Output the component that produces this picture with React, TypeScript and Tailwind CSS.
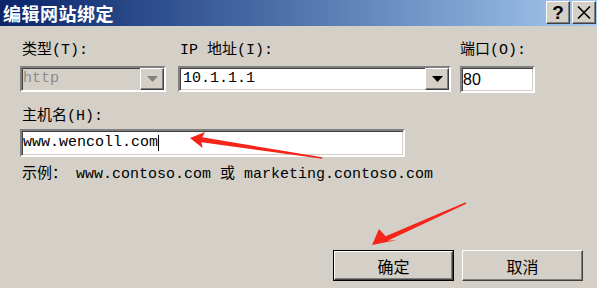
import React from "react";

const MONO = "font-['Liberation_Mono','Noto_Sans_CJK_SC',monospace]";

// classic 3D edges
const SUNKEN =
  "border-2 border-t-[#808080] border-l-[#808080] border-b-white border-r-white shadow-[inset_1px_1px_0_#404040,inset_-1px_-1px_0_#d4d0c8]";
const RAISED =
  "border border-t-white border-l-white border-b-[#404040] border-r-[#404040] shadow-[inset_-1px_-1px_0_#808080]";

function DropButton({ disabled }: { disabled?: boolean }) {
  return (
    <div className={`w-[24px] h-full bg-[#d4d0c8] flex items-center justify-center ${RAISED}`}>
      <svg width="11" height="6" viewBox="0 0 11 6">
        <polygon points="0,0 11,0 5.5,6" fill={disabled ? "#808080" : "#000"} />
      </svg>
    </div>
  );
}

function Button({ label, isDefault }: { label: string; isDefault?: boolean }) {
  return (
    <div className={`w-[121px] h-[31px] ${isDefault ? "border border-black" : ""}`}>
      <div
        className={`w-full h-full bg-[#d4d0c8] flex items-center justify-center text-[16px] text-black font-['Noto_Sans_CJK_SC',sans-serif] ${RAISED}`}
      >
        {label}
      </div>
    </div>
  );
}

export default function App() {
  return (
    <div className={`relative w-[597px] h-[288px] bg-[#d4d0c8] overflow-hidden flex flex-col text-[15px] text-black ${MONO}`}>
      {/* Title bar */}
      <div className="h-[26px] flex items-center justify-between bg-gradient-to-r from-[#0a246a] to-[#a6caf0] pl-[3px] pr-[1px]">
        <span className="text-white font-bold text-[18px] leading-none font-['Noto_Sans_CJK_SC',sans-serif] tracking-[0.5px]">
          编辑网站绑定
        </span>
        <div className="flex gap-[2px] self-start mt-[1px]">
          <div className={`w-[24px] h-[23px] bg-[#d4d0c8] flex items-center justify-center text-[19px] font-black leading-none font-['Liberation_Sans',sans-serif] ${RAISED}`}>
            ?
          </div>
          <div className={`w-[24px] h-[23px] bg-[#d4d0c8] flex items-center justify-center ${RAISED}`}>
            <svg width="14" height="13" viewBox="0 0 14 13">
              <path d="M1 0.5 L13 12.5 M13 0.5 L1 12.5" stroke="#000" strokeWidth="1.6" />
            </svg>
          </div>
        </div>
      </div>

      <div className="flex-1 flex flex-col pl-[20px] pr-[14px] pb-[7px]">
        {/* Type / IP / Port */}
        <div className="flex mt-[16px]">
          <div className="w-[146px] flex flex-col">
            <span className="h-[18px] leading-[18px] pl-[2px]">类型(T):</span>
            <div className={`mt-[6px] h-[26px] flex bg-[#d4d0c8] ${SUNKEN}`}>
              <span className="flex-1 pl-[1px] leading-[22px] text-[#8c8c8c]">http</span>
              <DropButton disabled />
            </div>
          </div>
          <div className="w-[273px] ml-[12px] flex flex-col">
            <span className="h-[18px] leading-[18px] pl-[2px]">IP 地址(I):</span>
            <div className={`mt-[6px] h-[26px] flex bg-white ${SUNKEN}`}>
              <span className="flex-1 pl-[3px] leading-[22px]">10.1.1.1</span>
              <DropButton />
            </div>
          </div>
          <div className="w-[75px] ml-[9px] flex flex-col">
            <span className="h-[18px] leading-[18px]">端口(O):</span>
            <div className={`mt-[6px] h-[27px] bg-white ${SUNKEN}`}>
              <span className="pl-[1px] leading-[23px] text-[16px] font-['Liberation_Sans',sans-serif]">80</span>
            </div>
          </div>
        </div>

        {/* Host name */}
        <span className="mt-[15px] h-[18px] leading-[18px] pl-[2px]">主机名(H):</span>
        <div className={`mt-[3px] w-[385px] h-[28px] bg-white flex items-center ${SUNKEN}`}>
          <span className="pl-[1px]">www.wencoll.com</span>
          <span className="w-px h-[16px] bg-black" />
        </div>
        <span className="mt-[9px] h-[18px] leading-[18px] pl-[2px]">
          示例： www.contoso.com 或 marketing.contoso.com
        </span>

        {/* Buttons */}
        <div className="mt-auto flex justify-end gap-[8px]">
          <Button label="确定" isDefault />
          <Button label="取消" />
        </div>
      </div>

      {/* annotation arrows */}
      <svg className="absolute inset-0 pointer-events-none" width="597" height="288" viewBox="0 0 597 288">
        <polygon
          points="190,138 205,132 202.3,137.3 322.1,157.3 321.9,158.7 201.5,142.3 202.6,148"
          fill="#f5251a"
        />
        <polygon
          points="372,245 379,229 385.6,236.2 465.7,202.3 466.3,203.7 387.6,240.8 397,240"
          fill="#f5251a"
        />
      </svg>
    </div>
  );
}
